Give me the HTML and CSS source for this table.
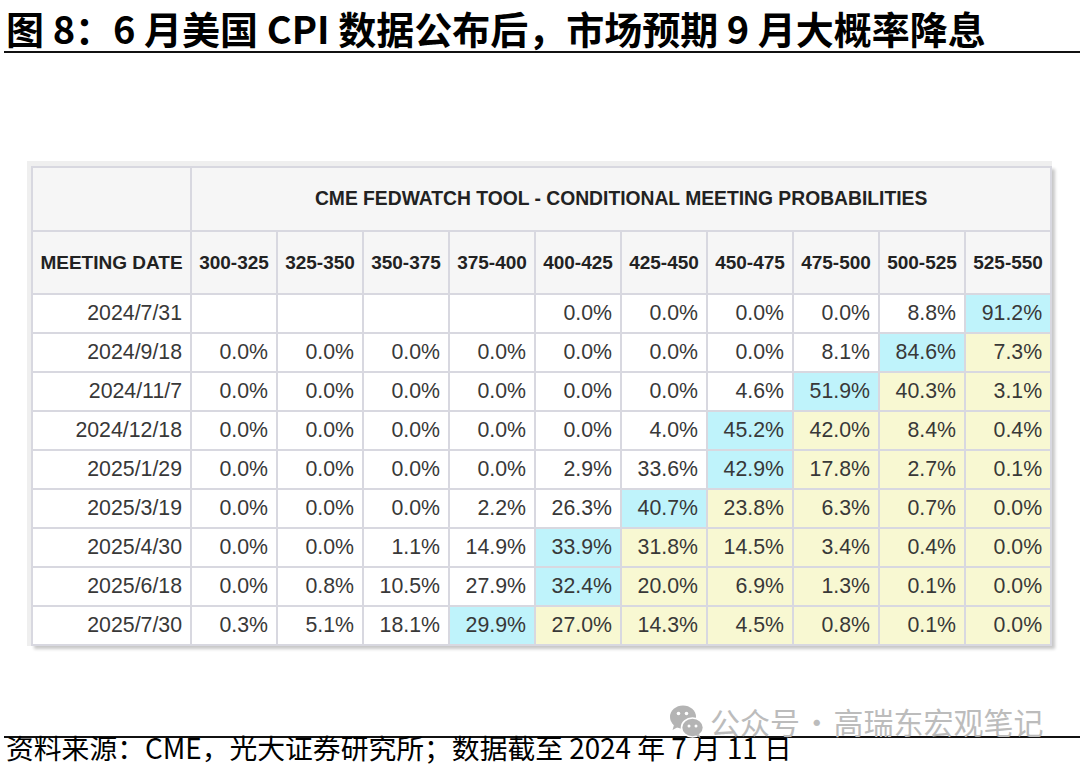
FILE: index.html
```html
<!DOCTYPE html>
<html lang="zh">
<head>
<meta charset="utf-8">
<title>图 8</title>
<link rel="stylesheet" href="styles.css">
</head>
<body>
<div class="page">
  <h1 class="title">图 8：6 月美国 CPI 数据公布后，市场预期 9 月大概率降息</h1>
  <div class="figure">
    <div class="frame">
      <table class="fed">
        <colgroup>
          <col class="c-date">
          <col class="c-rate"><col class="c-rate"><col class="c-rate"><col class="c-rate"><col class="c-rate">
          <col class="c-rate"><col class="c-rate"><col class="c-rate"><col class="c-rate"><col class="c-rate">
        </colgroup>
        <thead>
          <tr class="h1">
            <th></th>
            <th colspan="10">CME FEDWATCH TOOL - CONDITIONAL MEETING PROBABILITIES</th>
          </tr>
          <tr class="h2">
            <th>MEETING DATE</th>
            <th>300-325</th><th>325-350</th><th>350-375</th><th>375-400</th><th>400-425</th>
            <th>425-450</th><th>450-475</th><th>475-500</th><th>500-525</th><th>525-550</th>
          </tr>
        </thead>
        <tbody>
          <tr><td>2024/7/31</td><td></td><td></td><td></td><td></td><td>0.0%</td><td>0.0%</td><td>0.0%</td><td>0.0%</td><td>8.8%</td><td class="max">91.2%</td></tr>
          <tr><td>2024/9/18</td><td>0.0%</td><td>0.0%</td><td>0.0%</td><td>0.0%</td><td>0.0%</td><td>0.0%</td><td>0.0%</td><td>8.1%</td><td class="max">84.6%</td><td class="hi">7.3%</td></tr>
          <tr><td>2024/11/7</td><td>0.0%</td><td>0.0%</td><td>0.0%</td><td>0.0%</td><td>0.0%</td><td>0.0%</td><td>4.6%</td><td class="max">51.9%</td><td class="hi">40.3%</td><td class="hi">3.1%</td></tr>
          <tr><td>2024/12/18</td><td>0.0%</td><td>0.0%</td><td>0.0%</td><td>0.0%</td><td>0.0%</td><td>4.0%</td><td class="max">45.2%</td><td class="hi">42.0%</td><td class="hi">8.4%</td><td class="hi">0.4%</td></tr>
          <tr><td>2025/1/29</td><td>0.0%</td><td>0.0%</td><td>0.0%</td><td>0.0%</td><td>2.9%</td><td>33.6%</td><td class="max">42.9%</td><td class="hi">17.8%</td><td class="hi">2.7%</td><td class="hi">0.1%</td></tr>
          <tr><td>2025/3/19</td><td>0.0%</td><td>0.0%</td><td>0.0%</td><td>2.2%</td><td>26.3%</td><td class="max">40.7%</td><td class="hi">23.8%</td><td class="hi">6.3%</td><td class="hi">0.7%</td><td class="hi">0.0%</td></tr>
          <tr><td>2025/4/30</td><td>0.0%</td><td>0.0%</td><td>1.1%</td><td>14.9%</td><td class="max">33.9%</td><td class="hi">31.8%</td><td class="hi">14.5%</td><td class="hi">3.4%</td><td class="hi">0.4%</td><td class="hi">0.0%</td></tr>
          <tr><td>2025/6/18</td><td>0.0%</td><td>0.8%</td><td>10.5%</td><td>27.9%</td><td class="max">32.4%</td><td class="hi">20.0%</td><td class="hi">6.9%</td><td class="hi">1.3%</td><td class="hi">0.1%</td><td class="hi">0.0%</td></tr>
          <tr><td>2025/7/30</td><td>0.3%</td><td>5.1%</td><td>18.1%</td><td class="max">29.9%</td><td class="hi">27.0%</td><td class="hi">14.3%</td><td class="hi">4.5%</td><td class="hi">0.8%</td><td class="hi">0.1%</td><td class="hi">0.0%</td></tr>
        </tbody>
      </table>
    </div>
  </div>
  <div class="source">
    <p class="source-text">资料来源：CME，光大证券研究所；数据截至 2024 年 7 月 11 日</p>
    <div class="watermark">
      <svg class="wx" viewBox="0 0 36 36" width="36" height="36" aria-hidden="true">
        <ellipse cx="15" cy="14" rx="13" ry="11.5" fill="#b4b4b4"/>
        <path d="M6 22 L4.5 27 L10 24 Z" fill="#b4b4b4"/>
        <ellipse cx="24.5" cy="24.5" rx="11" ry="9.5" fill="#b4b4b4" stroke="#ffffff" stroke-width="1.6"/>
        <path d="M31 31 L32.5 35 L28 32.5 Z" fill="#b4b4b4"/>
        <circle cx="10.5" cy="10.5" r="1.8" fill="#ffffff"/>
        <circle cx="18.5" cy="10.5" r="1.8" fill="#ffffff"/>
        <circle cx="21" cy="23" r="1.5" fill="#ffffff"/>
        <circle cx="28" cy="23" r="1.5" fill="#ffffff"/>
      </svg>
      <span class="wm-text">公众号 · 高瑞东宏观笔记</span>
    </div>
  </div>
</div>
</body>
</html>
```
FILE: styles.css
```css
html, body {
  margin: 0;
  padding: 0;
  background: #ffffff;
}

.page {
  width: 1076px;
  height: 768px;
  padding-left: 4px;
  display: flex;
  flex-direction: column;
  font-family: "Noto Sans CJK SC", "Noto Sans", sans-serif;
  color: #000;
  overflow: hidden;
}

.title {
  margin: 0;
  padding: 0 0 0 2px;
  font-size: 38px;
  line-height: 55px;
  font-weight: 700;
  white-space: nowrap;
}

.title::after {
  content: "";
  display: block;
  margin: -4px 0 0 -2px;
  border-bottom: 2px solid #111;
}

.figure {
  margin-top: 108px;
  padding-left: 23px;
  display: flex;
}

.frame {
  background: #efefef;
  padding: 5px 0 0 4px;
}

.fed {
  border-collapse: collapse;
  table-layout: fixed;
  width: 1019px;
  font-family: "Liberation Sans", Arial, sans-serif;
  box-shadow: 3px 3px 3px rgba(0, 0, 0, 0.22);
  background: #ffffff;
}

.c-date { width: 159px; }
.c-rate { width: 86px; }

.fed th,
.fed td {
  border: 2px solid #d8d8e0;
  padding: 0;
}

.fed th {
  background: #f6f6f6;
  color: #222;
  font-weight: 700;
  font-size: 19px;
  text-align: center;
  white-space: nowrap;
}

.fed .h1 th {
  height: 62px;
  font-size: 19.3px;
}

.fed .h2 th {
  height: 61px;
}

.fed td {
  height: 37px;
  text-align: right;
  padding-right: 8px;
  font-size: 21.3px;
  color: #383838;
  white-space: nowrap;
}

.fed td.max { background: #bff3fb; }
.fed td.hi { background: #f8f8d2; }

.source {
  margin-top: auto;
  position: relative;
  border-top: 2px solid #111;
}

.source-text {
  margin: -6px 0 6px 0;
  padding-left: 2px;
  font-size: 27.8px;
  line-height: 30px;
  white-space: nowrap;
}

.watermark {
  position: absolute;
  left: 664px;
  top: -36px;
  display: flex;
  align-items: center;
  gap: 6px;
  color: #bcbcbc;
}

.wx { display: block; }

.wm-text {
  font-size: 30px;
  line-height: 38px;
  white-space: nowrap;
  word-spacing: -5px;
}
```
